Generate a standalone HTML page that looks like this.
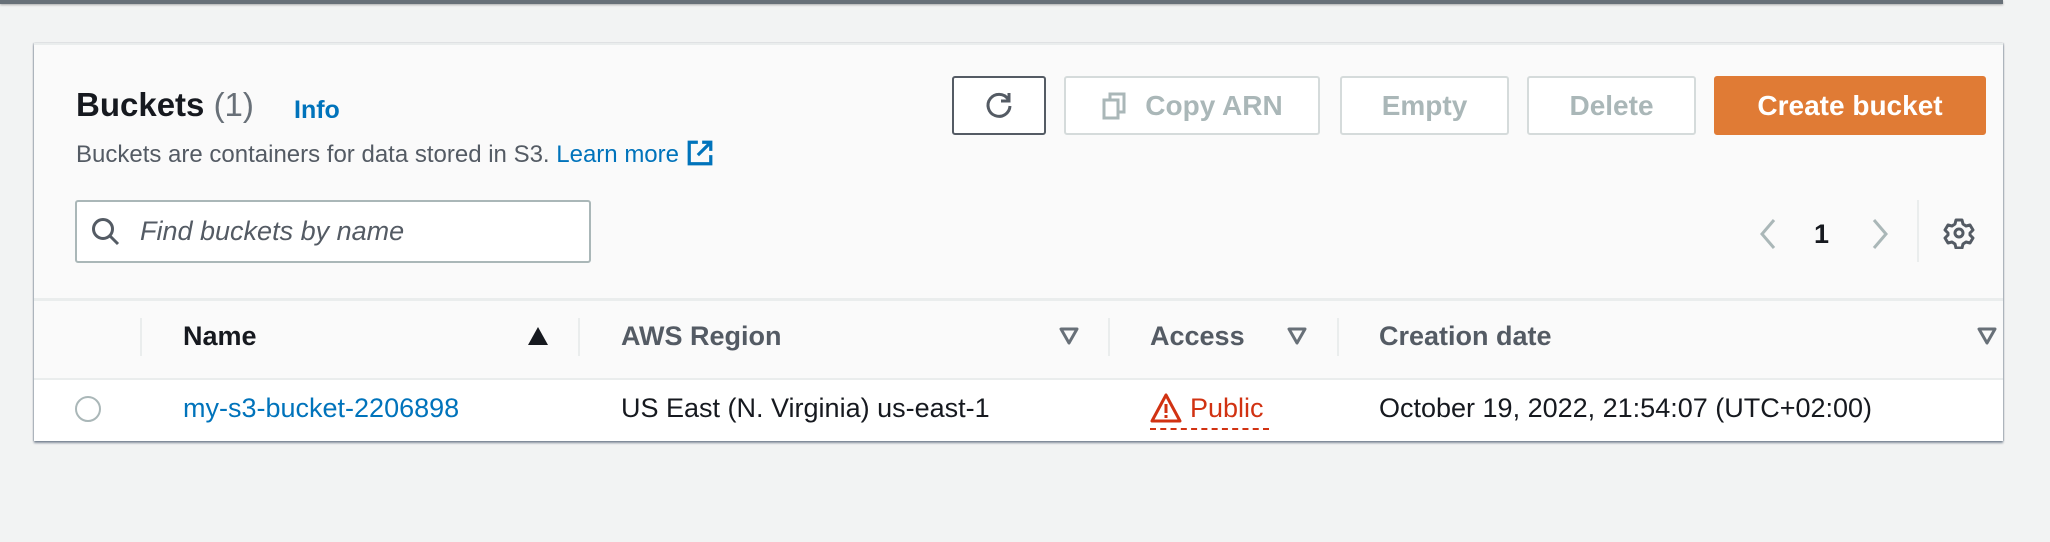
<!DOCTYPE html>
<html><head><meta charset="utf-8"><style>
*{box-sizing:border-box;margin:0;padding:0}
body{width:2050px;height:542px;background:#f2f3f3;font-family:"Liberation Sans",Arial,sans-serif;position:relative;overflow:hidden;color:#16191f}
.a{position:absolute;white-space:nowrap}
.topbar{left:0;top:0;width:2003px;height:4px;background:#687078;box-shadow:0 1px 2px rgba(0,0,0,.3)}
.card{left:34px;top:43px;width:1969px;height:398px;background:#fafafa;border-top:2px solid #eaeded;box-shadow:0 2px 2px rgba(0,22,51,.45),-1px 0 1px rgba(0,22,51,.2),1px 0 1px rgba(0,22,51,.2)}
.btn{position:absolute;top:76px;height:59px;border:2px solid #d5dbdb;border-radius:3px;background:#fff;color:#aab7b8;font-weight:bold;font-size:28px;display:flex;align-items:center;justify-content:center}
.hd{font-weight:bold;font-size:27px;color:#545b64;top:321px}
.div{position:absolute;width:2px;background:#eaeded;top:318px;height:38px}
.row{font-size:27px;top:393px}
</style></head><body>
<div class="a topbar"></div>
<div class="a card"></div>
<div class="a" style="left:34px;top:298px;width:1969px;height:3px;background:#eaeded"></div>
<div class="a" style="left:34px;top:378px;width:1969px;height:63px;background:#fff;border-top:2px solid #eaeded"></div>

<div class="a" style="left:76px;top:86px;font-size:33px;font-weight:bold">Buckets <span style="font-weight:normal;color:#687078">(1)</span></div>
<div class="a" style="left:294px;top:96px;font-size:25px;font-weight:bold;color:#0073bb">Info</div>
<div class="a" style="left:76px;top:139px;font-size:24px;color:#545b64">Buckets are containers for data stored in S3. <span style="color:#0073bb">Learn more</span>
<svg width="28" height="28" viewBox="0 0 26 26" style="vertical-align:-5px"><path d="M11 3H3v20h20v-8" fill="none" stroke="#0073bb" stroke-width="3"/><path d="M15 3h8v8M23 3L11 15" fill="none" stroke="#0073bb" stroke-width="3"/></svg></div>

<div class="btn" style="left:952px;width:94px;border-color:#545b64;color:#545b64"><svg width="34" height="34" viewBox="0 0 34 34"><path d="M26 10A11 11 0 1 0 28 17" fill="none" stroke="#545b64" stroke-width="3"/><path d="M27 4v8h-8" fill="none" stroke="#545b64" stroke-width="3"/></svg></div>
<div class="btn" style="left:1064px;width:256px"><svg width="30" height="30" viewBox="0 0 30 30" style="margin-right:14px"><rect x="3" y="9" width="14" height="18" fill="none" stroke="#aab7b8" stroke-width="3"/><path d="M9 9V3h14v18h-6" fill="none" stroke="#aab7b8" stroke-width="3"/></svg>Copy ARN</div>
<div class="btn" style="left:1340px;width:169px">Empty</div>
<div class="btn" style="left:1527px;width:169px">Delete</div>
<div class="btn" style="left:1714px;width:272px;background:#e07b35;border-color:#e07b35;color:#fff">Create bucket</div>

<div class="a" style="left:75px;top:200px;width:516px;height:63px;border:2px solid #aab7b8;border-radius:3px;background:#fff"></div>
<svg class="a" style="left:90px;top:216px" width="32" height="32" viewBox="0 0 32 32"><circle cx="13" cy="13" r="9.5" fill="none" stroke="#545b64" stroke-width="3"/><path d="M20 20l8 8" stroke="#545b64" stroke-width="3"/></svg>
<div class="a" style="left:140px;top:216px;font-size:27px;font-style:italic;color:#545b64">Find buckets by name</div>

<svg class="a" style="left:1756px;top:216px" width="24" height="36" viewBox="0 0 24 36"><path d="M18 4L6 18l12 14" fill="none" stroke="#aab7b8" stroke-width="3"/></svg>
<div class="a" style="left:1814px;top:219px;font-size:27px;font-weight:bold">1</div>
<svg class="a" style="left:1868px;top:216px" width="24" height="36" viewBox="0 0 24 36"><path d="M6 4l12 14L6 32" fill="none" stroke="#aab7b8" stroke-width="3"/></svg>
<div class="a" style="left:1917px;top:200px;width:2px;height:62px;background:#eaeded"></div>
<svg class="a" style="left:1943px;top:217px" width="32" height="32" viewBox="0 0 32 32"><path d="M13 3h6l1 4 3 2 4-1 3 5-3 3v2l3 3-3 5-4-1-3 2-1 4h-6l-1-4-3-2-4 1-3-5 3-3v-2l-3-3 3-5 4 1 3-2z" fill="none" stroke="#545b64" stroke-width="3" stroke-linejoin="round"/><circle cx="16" cy="16" r="4" fill="none" stroke="#545b64" stroke-width="3"/></svg>

<div class="div" style="left:140px"></div><div class="div" style="left:578px"></div><div class="div" style="left:1108px"></div><div class="div" style="left:1337px"></div>
<div class="a hd" style="left:183px;color:#16191f">Name</div>
<svg class="a" style="left:527px;top:326px" width="22" height="20" viewBox="0 0 22 20"><path d="M11 1L21 19H1z" fill="#16191f"/></svg>
<div class="a hd" style="left:621px">AWS Region</div>
<svg class="a" style="left:1059px;top:327px" width="20" height="18" viewBox="0 0 20 18"><path d="M2 2h16L10 16z" fill="none" stroke="#687078" stroke-width="3" stroke-linejoin="round"/></svg>
<div class="a hd" style="left:1150px">Access</div>
<svg class="a" style="left:1287px;top:327px" width="20" height="18" viewBox="0 0 20 18"><path d="M2 2h16L10 16z" fill="none" stroke="#687078" stroke-width="3" stroke-linejoin="round"/></svg>
<div class="a hd" style="left:1379px">Creation date</div>
<svg class="a" style="left:1977px;top:327px" width="20" height="18" viewBox="0 0 20 18"><path d="M2 2h16L10 16z" fill="none" stroke="#687078" stroke-width="3" stroke-linejoin="round"/></svg>

<div class="a" style="left:75px;top:396px;width:26px;height:26px;border:2px solid #aab7b8;border-radius:50%;background:#fff"></div>
<div class="a row" style="left:183px;color:#0073bb">my-s3-bucket-2206898</div>
<div class="a row" style="left:621px">US East (N. Virginia) us-east-1</div>
<svg class="a" style="left:1150px;top:392px" width="32" height="32" viewBox="0 0 32 32"><path d="M16 3L2 29h28z" fill="none" stroke="#d13212" stroke-width="3" stroke-linejoin="round"/><path d="M16 12v9M16 23v3" stroke="#d13212" stroke-width="3"/></svg>
<div class="a row" style="left:1190px;color:#d13212">Public</div>
<div class="a" style="left:1150px;top:428px;width:119px;border-top:2px dashed #d13212"></div>
<div class="a row" style="left:1379px">October 19, 2022, 21:54:07 (UTC+02:00)</div>
</body></html>
